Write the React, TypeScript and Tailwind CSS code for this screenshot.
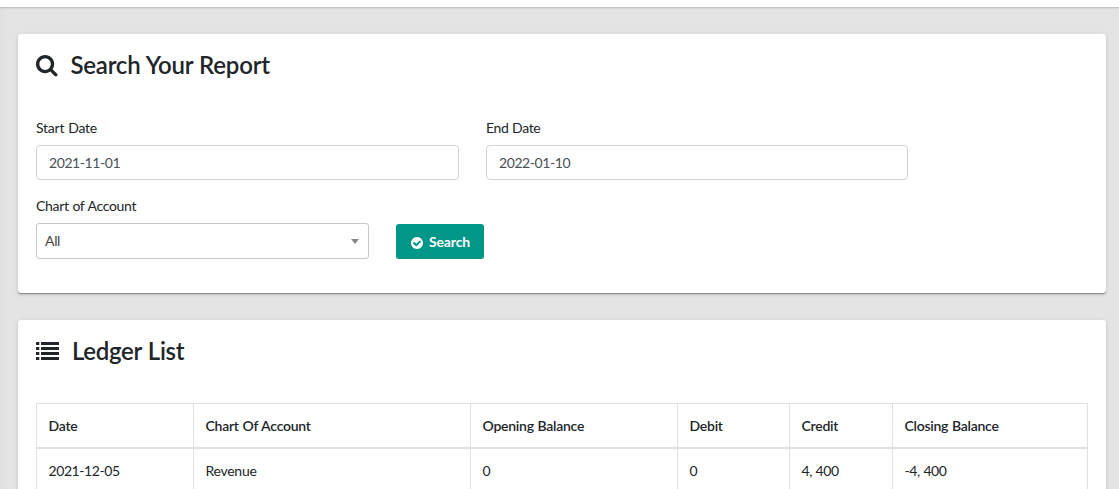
import React from "react";

const headers = ["Date", "Chart Of Account", "Opening Balance", "Debit", "Credit", "Closing Balance"];
const row = ["2021-12-05", "Revenue", "0", "0", "4, 400", "-4, 400"];

const SearchIcon = () => (
  <svg viewBox="64 128 1664 1664" className="mr-[13px] size-[21.5px] shrink-0" fill="currentColor">
    <path d="M1216 832q0-185-131.5-316.5t-316.5-131.5-316.5 131.5-131.5 316.5 131.5 316.5 316.5 131.5 316.5-131.5 131.5-316.5zm512 832q0 52-38 90t-90 38q-54 0-90-38l-343-342q-179 124-399 124-143 0-273.5-55.5t-225-150-150-225-55.5-273.5 55.5-273.5 150-225 225-150 273.5-55.5 273.5 55.5 225 150 150 225 55.5 273.5q0 220-124 399l343 343q37 37 37 90z" />
  </svg>
);

const ListIcon = () => (
  <svg viewBox="0 0 23 18" className="mr-[13px] mb-[2px] h-[18px] w-[23px] shrink-0" fill="currentColor">
    {[0, 5, 10, 15].map((y) => (
      <g key={y}>
        <rect x="0" y={y} width="3.3" height="3" rx="0.3" />
        <rect x="5" y={y} width="18" height="3" rx="0.3" />
      </g>
    ))}
  </svg>
);

const CheckIcon = () => (
  <svg viewBox="128 128 1536 1536" className="mt-[2px] size-3 shrink-0" fill="currentColor">
    <path d="M1412 734q0-28-18-46l-91-90q-19-19-45-19t-45 19l-408 407-226-226q-19-19-45-19t-45 19l-91 90q-18 18-18 46 0 27 18 45l362 362q19 19 45 19 27 0 46-19l543-543q18-18 18-45zm252 162q0 209-103 385.5t-279.5 279.5-385.5 103-385.5-103-279.5-279.5-103-385.5 103-385.5 279.5-279.5 385.5-103 385.5 103 279.5 279.5 103 385.5z" />
  </svg>
);

export default function App() {
  return (
    <div className="h-[489px] overflow-hidden bg-[#e4e4e4] bg-linear-to-r from-[#e0e0e0] to-[#e4e4e4] to-[8px] font-[Lato,sans-serif] text-[14px] leading-[21px] tracking-[-0.32px] text-[#212529] [word-spacing:0.5px]">
      <div className="h-[7px] bg-white shadow-[0_1px_2px_rgba(0,0,0,0.2)]" />
      <main className="flex flex-col gap-[27px] pt-[27px] pr-[13px] pl-[18px]">
        <section className="h-[259px] rounded-[3px] bg-white px-[18px] pt-[16px] shadow-[0_2px_2px_0_rgba(0,0,0,0.1),0_1px_5px_0_rgba(0,0,0,0.1),0_1px_0_0_rgba(0,0,0,0.27)]">
          <h3 className="flex h-8 items-center text-[24px] font-semibold tracking-[-0.23px]"><SearchIcon /><span className="-mt-[3px]">Search Your Report</span></h3>
          <div className="mt-[35px] flex gap-[27px]">
            <div className="w-[423px]">
              <label className="block tracking-[-0.22px]">Start Date</label>
              <div className="mt-[7px] flex h-[35px] items-center rounded border border-[#ced4da] px-3 tracking-[-0.42px] text-[#495057]">2021-11-01</div>
            </div>
            <div className="w-[422px]">
              <label className="block tracking-[-0.38px]">End Date</label>
              <div className="mt-[7px] flex h-[35px] items-center rounded border border-[#ced4da] px-3 tracking-[-0.42px] text-[#495057]">2022-01-10</div>
            </div>
          </div>
          <div className="mt-[15px] flex items-end gap-[27px]">
            <div className="w-[333px]">
              <label className="block">Chart of Account</label>
              <div className="mt-[7px] flex h-[36px] items-center justify-between rounded-[3px] border border-[#c8c8c8] pr-[9px] pb-px pl-2 text-[#444]">
                All
                <span className="mt-[2px] border-x-4 border-t-[5px] border-x-transparent border-t-[#888]" />
              </div>
            </div>
            <button className="flex h-[35px] w-[88px] items-center gap-[6px] rounded-[3px] bg-[#009688] pl-[15px] font-bold tracking-[-0.15px] text-white"><CheckIcon />Search</button>
          </div>
        </section>
        <section className="h-[300px] shrink-0 rounded-[3px] bg-white px-[18px] pt-[16px] shadow-[0_2px_2px_0_rgba(0,0,0,0.1),0_1px_5px_0_rgba(0,0,0,0.1),0_1px_0_0_rgba(0,0,0,0.27)]">
          <h3 className="flex h-8 items-center text-[24px] font-semibold tracking-[-0.3px]"><ListIcon /><span className="-mt-[3px]">Ledger List</span></h3>
          <table className="mt-[35px] w-full table-fixed border-collapse text-left">
            <colgroup><col className="w-[157px]" /><col className="w-[277px]" /><col className="w-[207px]" /><col className="w-[112px]" /><col className="w-[103px]" /><col /></colgroup>
            <thead><tr className="h-[44px]">{headers.map((h) => <th key={h} className="border border-b-2 border-[#dee2e6] px-[11.5px] font-semibold tracking-[-0.25px]">{h}</th>)}</tr></thead>
            <tbody><tr className="h-[45px]">{row.map((c, i) => <td key={i} className={`border border-[#dee2e6] px-[11.5px] ${i === 1 ? "tracking-[-0.28px]" : "tracking-[-0.42px]"}`}>{c}</td>)}</tr></tbody>
          </table>
        </section>
      </main>
    </div>
  );
}
